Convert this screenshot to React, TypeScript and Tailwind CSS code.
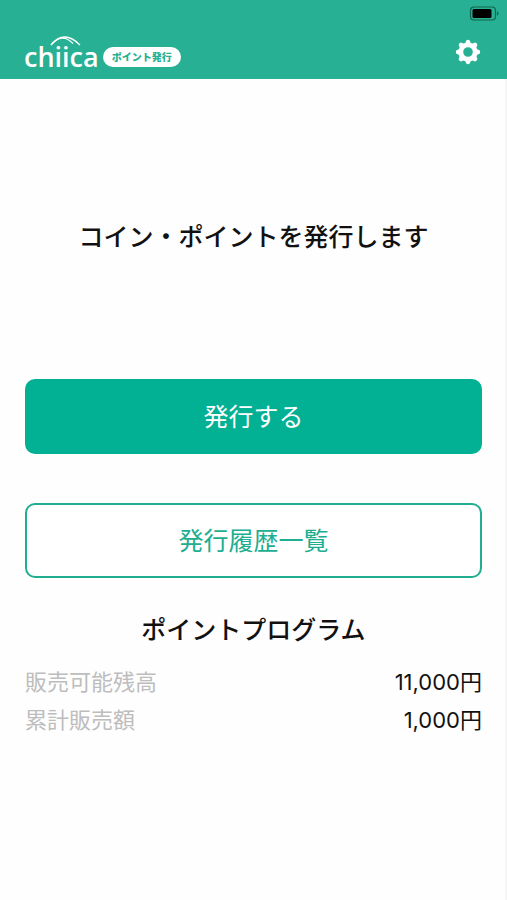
function BatteryIcon() {
  return (
    <svg width="30" height="15" viewBox="0 0 30 15" fill="none" role="img" aria-label="Battery">
      <rect x="1.5" y="1" width="25" height="13" rx="3.5" stroke="#12664f" strokeWidth="1.2" />
      <rect x="3.5" y="3" width="19" height="9" rx="1.5" fill="#000" />
      <path d="M28 5.5c1 .4 1.5 1.1 1.5 2s-.5 1.6-1.5 2z" fill="#12664f" />
    </svg>
  );
}

function GearIcon() {
  return (
    <svg width="26" height="26" viewBox="0 0 26 26" fill="none" aria-hidden="true">
      <circle cx="13" cy="13" r="7.2" stroke="#fff" strokeWidth="4.8" />
      <g fill="#fff">
        {[0, 45, 90, 135, 180, 225, 270, 315].map((angle) => (
          <path key={angle} d="M9.8 5 11.3 1.4Q13 .2 14.7 1.4L16.2 5z" transform={`rotate(${angle} 13 13)`} />
        ))}
      </g>
    </svg>
  );
}

function Logo() {
  return (
    <div className="relative font-['Open_Sans',sans-serif] text-[27px] leading-7 font-semibold text-white">
      chiica
      <svg className="absolute -top-2 left-6" width="36" height="12" viewBox="0 0 36 12" fill="none" aria-hidden="true">
        <path d="M3 10Q16-6 32 10" stroke="#fff" strokeWidth="1.3" />
        <path d="M3 10Q14-3 25 8.500" stroke="#fff" strokeWidth="1.1" />
      </svg>
    </div>
  );
}

const balances = [
  { label: "販売可能残高", value: "11,000円" },
  { label: "累計販売額", value: "1,000円" },
];

export default function App() {
  return (
    <div className="flex min-h-screen flex-col bg-[#fefefe] font-['Inter','Noto_Sans_CJK_JP',sans-serif] text-[#111]">
      <header className="bg-[#27b093]">
        <div className="flex justify-end px-2 pt-[6px]">
          <BatteryIcon />
        </div>
        <div className="flex h-[58px] items-center justify-between pt-1 pr-[26px] pl-6">
          <div className="flex items-center gap-1 pt-[10px]">
            <Logo />
            <span className="flex h-5 items-center rounded-full bg-white px-[9px] text-[10px] leading-5 font-black text-[#27b093]">
              ポイント発行
            </span>
          </div>
          <button type="button" aria-label="設定">
            <GearIcon />
          </button>
        </div>
      </header>
      <main className="flex grow flex-col border-r-2 border-[#f5f5f5] pr-[23px] pl-[25px] text-center">
        <h1 className="mt-[140px] text-[25px] leading-9 font-medium">コイン・ポイントを発行します</h1>
        <button type="button" className="mt-[124px] h-[75px] rounded-[10px] bg-[#02b093] pt-0.5 text-[25px] text-white">
          発行する
        </button>
        <button
          type="button"
          className="mt-[49px] h-[75px] rounded-[10px] border-2 border-[#20ad90] bg-white pt-0.5 text-[25px] text-[#20ad90]"
        >
          発行履歴一覧
        </button>
        <h2 className="mt-[34px] text-[25px] leading-9 font-medium">ポイントプログラム</h2>
        <dl className="mt-[15px] text-[22px] leading-[38px]">
          {balances.map(({ label, value }) => (
            <div key={label} className="flex justify-between">
              <dt className="text-[#bdbdbd]">{label}</dt>
              <dd>{value}</dd>
            </div>
          ))}
        </dl>
      </main>
    </div>
  );
}
